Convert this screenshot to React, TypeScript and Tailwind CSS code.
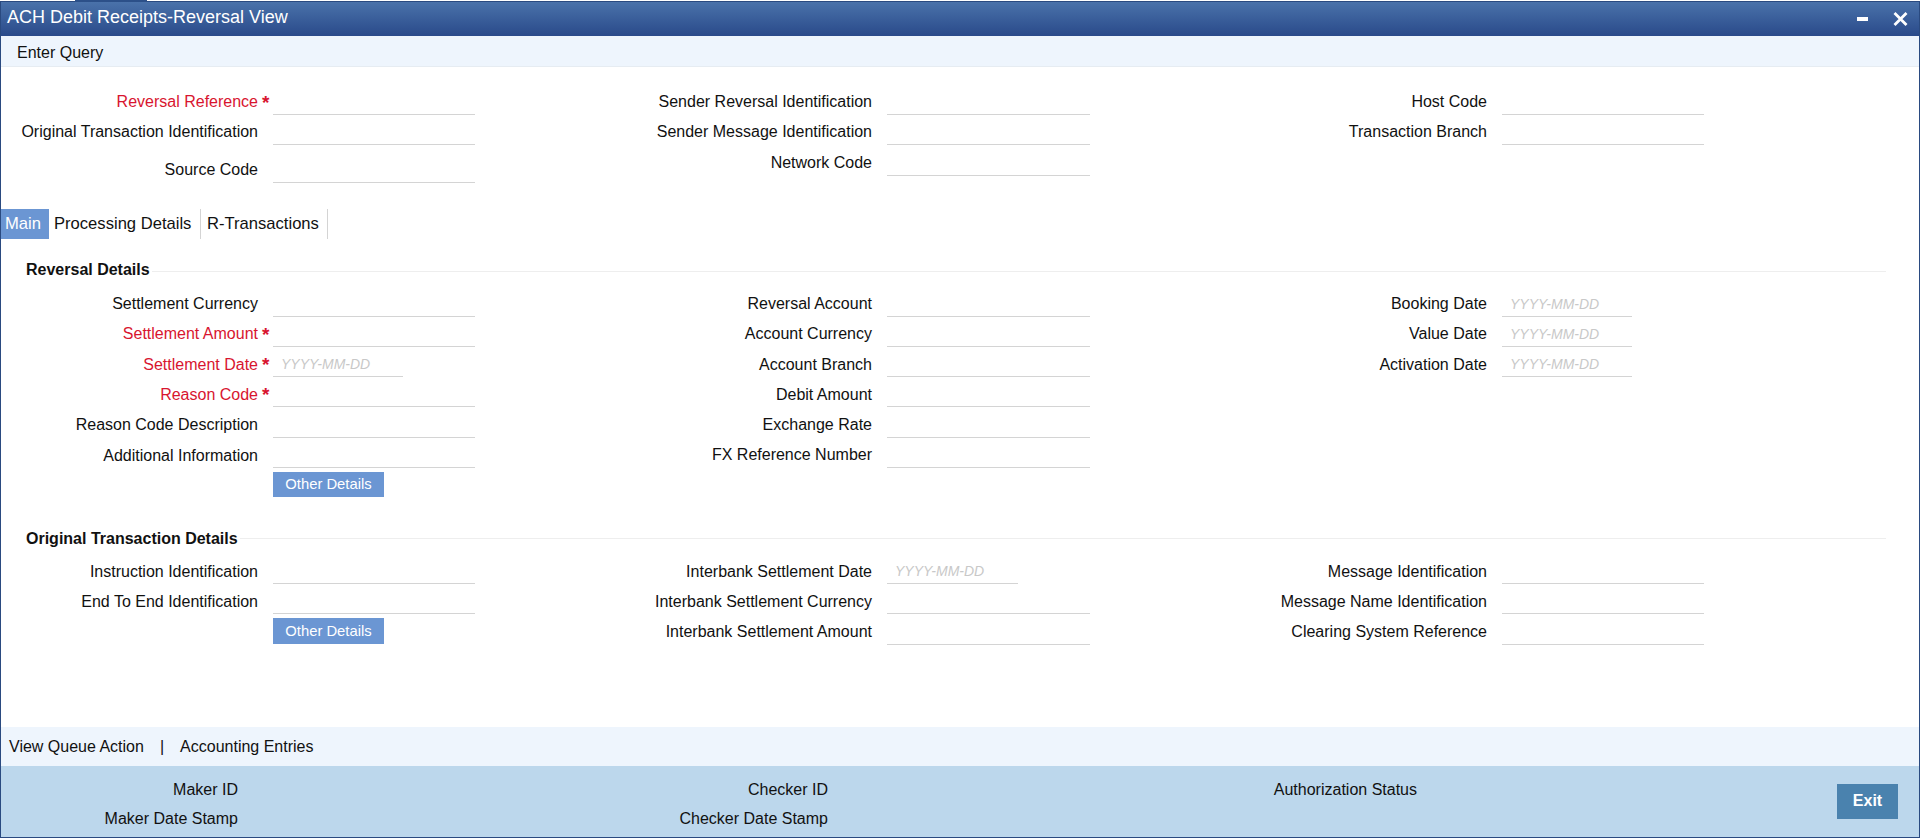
import React from 'react';

const font = "font-['Liberation_Sans',Arial,sans-serif]";

type FieldProps = {
  label: string;
  required?: boolean;
  date?: boolean;
  up?: boolean;
  wide?: boolean;
  rowClass?: string;
  labelClass?: string;
};

const Field = ({ label, required, date, up, wide, rowClass = 'h-[30px]', labelClass = 'w-[260px]' }: FieldProps) => {
  const dateWidth = wide ? 'w-[131px]' : 'w-[130px]';
  const inputWidth = wide ? 'w-[203px]' : 'w-[202px]';
  return (
    <div className={`flex items-end ${rowClass}`}>
      <div className={`${labelClass} flex justify-end ${up ? 'pb-[4px]' : 'pb-[3px]'} text-right leading-[19px] whitespace-nowrap ${required ? 'text-[#d8152f]' : 'text-[#111]'}`}>
        {label}
      </div>
      <div className="w-[15px] h-full relative">
        {required && <span className="absolute left-[4px] bottom-[3px] text-[#d8152f] font-bold leading-[19px] text-[19px]">*</span>}
      </div>
      <div className={`${date ? `${dateWidth} text-[#c8c8c8] italic text-[14px] pl-[8px] leading-[22px]` : inputWidth} h-[24px] border-b border-[#d4d4d4]`}>
        {date ? 'YYYY-MM-DD' : ''}
      </div>
    </div>
  );
};

const OtherDetails = ({ className }: { className: string }) => (
  <div className={`ml-[272px] mt-[4px] w-[111px] bg-[#6b96d3] text-white text-[14.8px] text-center ${className}`}>Other Details</div>
);

const SectionHead = ({ title, className, lineClass }: { title: string; className: string; lineClass: string }) => (
  <div className={`flex items-center ml-[25px] mr-[33px] ${className}`}>
    <span className="font-bold text-[16px] leading-[20px] text-[#111] whitespace-nowrap">{title}</span>
    <div className={`flex-1 h-px bg-[#eeeeee] ml-[2px] ${lineClass}`} />
  </div>
);

const col1 = 'w-[257px]';

export default function App() {
  return (
    <div className={`${font} w-[1920px] h-[840px] bg-white text-[16px] relative overflow-hidden`}>
      <div className="absolute left-[75px] top-0 w-[72px] h-[2px] bg-[#2c5089]" />
      <div className="mt-[1px] h-[837px] border border-[#2a4a80] flex flex-col">
        {/* Title bar */}
        <div className="h-[34px] shrink-0 bg-gradient-to-b from-[#4a72aa] to-[#2a4a8a] flex items-center justify-between pl-[6px] pr-[11px] text-white">
          <span className="text-[18px] leading-[20px] pb-[5px]">ACH Debit Receipts-Reversal View</span>
          <div className="flex items-center gap-[25px]">
            <div className="w-[11px] h-[4px] bg-white" />
            <svg width="15" height="14" viewBox="0 0 15 14" className="block">
              <path d="M1.5 1 L13.5 13 M13.5 1 L1.5 13" stroke="#fff" strokeWidth="2.8" fill="none" />
            </svg>
          </div>
        </div>
        <div className="h-[31px] shrink-0 bg-[#eef5fd] border-b border-[#e6ecf2] pl-[16px] pt-[1px] leading-[31px] text-[#111]">Enter Query</div>

        {/* Header fields */}
        <div className="flex h-[142px] shrink-0 pt-[18px]">
          <div className="w-[611px]">
            <Field label="Reversal Reference" required up labelClass={col1} />
            <Field label="Original Transaction Identification" up labelClass={col1} />
            <Field label="Source Code" up rowClass="h-[38px]" labelClass={col1} />
          </div>
          <div className="w-[615px]">
            <Field label="Sender Reversal Identification" up wide />
            <Field label="Sender Message Identification" up wide />
            <Field label="Network Code" up wide rowClass="h-[31px]" />
          </div>
          <div className="flex-1">
            <Field label="Host Code" up />
            <Field label="Transaction Branch" up />
          </div>
        </div>

        {/* Tabs */}
        <div className="flex h-[30px] shrink-0 leading-[29px] text-[16.6px] text-[#111]">
          <div className="w-[48px] bg-[#6b96d3] text-white pl-[4px]">Main</div>
          <div className="w-[152px] border-r border-[#d4d4d4] pl-[5px]">Processing Details</div>
          <div className="w-[127px] border-r border-[#d4d4d4] pl-[6px]">R-Transactions</div>
        </div>

        {/* Reversal details */}
        <SectionHead title="Reversal Details" className="mt-[21px] h-[20px]" lineClass="mt-[2px]" />
        <div className="flex">
          <div className="w-[611px]">
            <Field label="Settlement Currency" up labelClass={col1} rowClass="h-[37px]" />
            <Field label="Settlement Amount" up required labelClass={col1} />
            <Field label="Settlement Date" required date labelClass={col1} />
            <Field label="Reason Code" required labelClass={col1} />
            <Field label="Reason Code Description" up labelClass={col1} rowClass="h-[31px]" />
            <Field label="Additional Information" labelClass={col1} />
            <OtherDetails className="h-[25px] leading-[24px]" />
          </div>
          <div className="w-[615px]">
            <Field label="Reversal Account" up wide rowClass="h-[37px]" />
            <Field label="Account Currency" up wide />
            <Field label="Account Branch" wide />
            <Field label="Debit Amount" wide />
            <Field label="Exchange Rate" up wide rowClass="h-[31px]" />
            <Field label="FX Reference Number" up wide />
          </div>
          <div className="flex-1">
            <Field label="Booking Date" up date rowClass="h-[37px]" />
            <Field label="Value Date" up date />
            <Field label="Activation Date" date />
          </div>
        </div>

        {/* Original transaction details */}
        <SectionHead title="Original Transaction Details" className="mt-[32px] h-[20px]" lineClass="-mt-[2px]" />
        <div className="flex">
          <div className="w-[611px]">
            <Field label="Instruction Identification" labelClass={col1} rowClass="h-[35px]" />
            <Field label="End To End Identification" labelClass={col1} />
            <OtherDetails className="h-[26px] leading-[26px]" />
          </div>
          <div className="w-[615px]">
            <Field label="Interbank Settlement Date" date wide rowClass="h-[35px]" />
            <Field label="Interbank Settlement Currency" wide />
            <Field label="Interbank Settlement Amount" up wide rowClass="h-[31px]" />
          </div>
          <div className="flex-1">
            <Field label="Message Identification" rowClass="h-[35px]" />
            <Field label="Message Name Identification" />
            <Field label="Clearing System Reference" up rowClass="h-[31px]" />
          </div>
        </div>

        <div className="flex-1" />
        {/* Actions */}
        <div className="h-[39px] shrink-0 bg-[#eef5fd] flex items-center pl-[8px] text-[#111]">
          <span>View Queue Action</span>
          <span className="ml-[16px]">|</span>
          <span className="ml-[16px]">Accounting Entries</span>
        </div>
        {/* Footer */}
        <div className="h-[71px] shrink-0 bg-[#bcd7ec] flex text-[#111] relative">
          <div className="flex flex-col w-[237px] items-end pt-[14px] gap-[10px] leading-[19px]">
            <span>Maker ID</span>
            <span>Maker Date Stamp</span>
          </div>
          <div className="flex flex-col w-[590px] items-end pt-[14px] gap-[10px] leading-[19px]">
            <span>Checker ID</span>
            <span>Checker Date Stamp</span>
          </div>
          <div className="flex flex-col w-[589px] items-end pt-[14px] leading-[19px]">
            <span>Authorization Status</span>
          </div>
          <div className="absolute right-[21px] top-[18px] w-[61px] h-[35px] bg-[#4a82ae] text-white font-bold text-[16px] leading-[34px] text-center">Exit</div>
        </div>
      </div>
    </div>
  );
}
